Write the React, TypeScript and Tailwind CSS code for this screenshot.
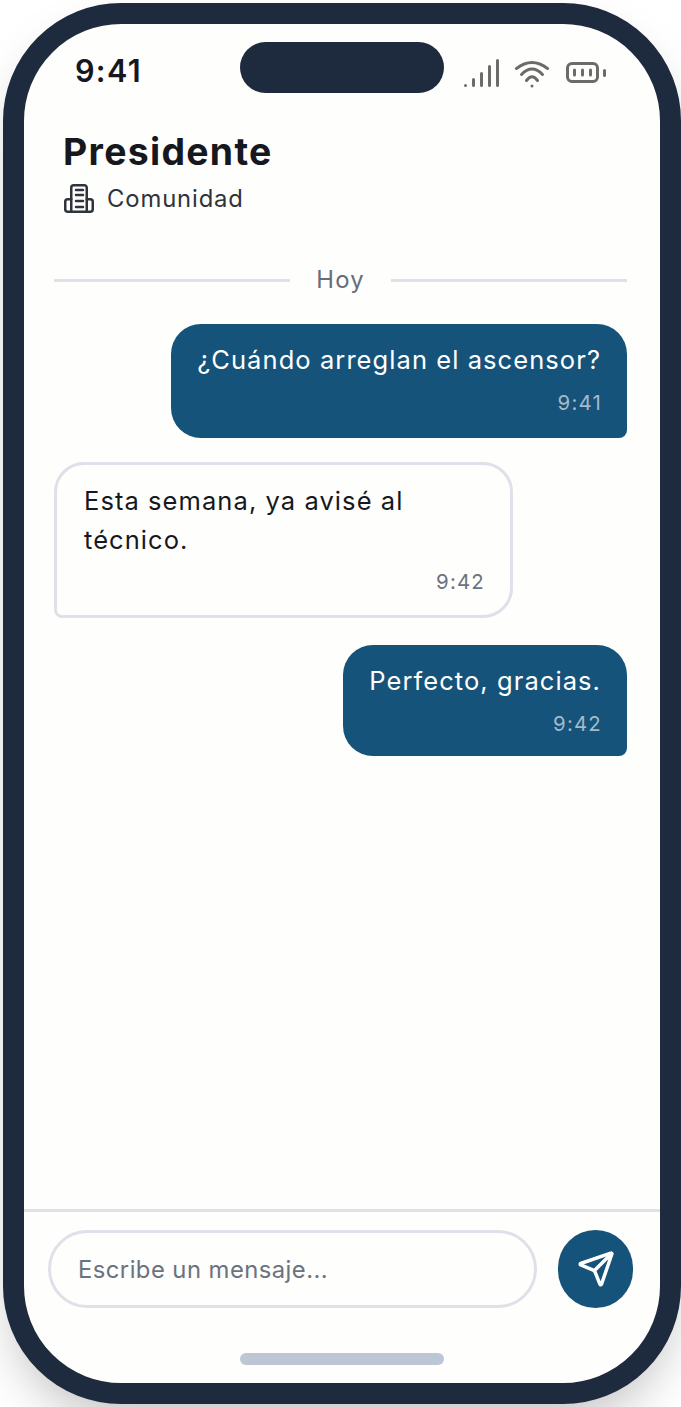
import { Send } from "lucide-react";

function SignalIcon() {
  return (
    <svg width="36" height="36" viewBox="0 0 36 36" fill="none" stroke="#6b6b6b" strokeLinecap="round" strokeWidth="3">
      <path d="M2.500 32.500v.1M10.500 26.500v6M18.500 20.500v12M26.500 13.500v19M34.500 7.500v25" />
    </svg>
  );
}

function WifiIcon() {
  return (
    <svg width="36" height="36" viewBox="0 0 36 36" fill="none" stroke="#6b6b6b" strokeLinecap="round" strokeWidth="3">
      <path d="M2.500 15.500Q18 3.500 33.500 15.500" />
      <path d="M7.500 21.500Q18 10.500 28.500 21.500" />
      <path d="M12.500 27.500Q18 20 23.500 27.500" />
      <path d="M18 33v.1" />
    </svg>
  );
}

function BatteryIcon() {
  return (
    <svg width="42" height="36" viewBox="0 0 42 36" fill="none" stroke="#6b6b6b" strokeLinecap="round" strokeWidth="3">
      <rect x="2.500" y="10.500" width="30" height="18" rx="4.500" />
      <path d="M9.500 17v5M17.500 17v5M25.500 17v5" />
      <path d="M39.500 17.500v5" />
    </svg>
  );
}

function BuildingIcon() {
  return (
    <svg width="32" height="32" viewBox="0 0 32 32" fill="none" stroke="#2f343c" strokeWidth="2.500" strokeLinecap="round" strokeLinejoin="round">
      <path d="M9.250 28.750V4.750a2.500 2.500 0 0 1 2.500-2.500h10.500a2.500 2.500 0 0 1 2.500 2.500v24" />
      <path d="M9.250 16.250H5.750a2.500 2.500 0 0 0-2.500 2.500v7.500a2.500 2.500 0 0 0 2.500 2.500h22.500a2.500 2.500 0 0 0 2.500-2.500v-7.500a2.500 2.500 0 0 0-2.500-2.500h-3.500" />
      <path d="M14 7h7M14 12h7M14 18h7M14 24h7" />
    </svg>
  );
}

function Outgoing({ text, time, className }: { text: string; time: string; className: string }) {
  return (
    <div className={`self-end rounded-[30px] rounded-br-lg bg-[#16537a] pt-[17px] pr-[26px] pl-[26px] ${className}`}>
      <p className="text-[25.500px] leading-[38px] tracking-[1.07px] text-white">{text}</p>
      <p className="mt-[9px] -mr-[1px] text-right text-[20.400px] leading-[29px] tracking-[1.2px] text-[#a3bacb]">{time}</p>
    </div>
  );
}

export default function App() {
  return (
    <div className="h-[1407px] w-[681px] overflow-hidden bg-white pt-[3px] pl-[3px] font-['Inter',sans-serif]">
      <div className="relative flex h-[1401px] w-[678px] flex-col overflow-hidden rounded-[118px] border-[21px] border-[#1e2a3d] bg-[#fefefc] shadow-2xl">
        <div className="absolute top-[18px] left-[216px] h-[51px] w-[204px] rounded-[26px] bg-[#1e2a3d]" />

        <div className="flex h-[72px] shrink-0 items-center justify-between pt-[22px] pr-[53px] pl-[51px]">
          <span className="text-[30.600px] font-semibold tracking-[1.300px] text-[#16181d]">9:41</span>
          <div className="flex items-center gap-[15px]">
            <SignalIcon />
            <WifiIcon />
            <BatteryIcon />
          </div>
        </div>

        <div className="px-[38px] pt-[32px]">
          <h1 className="ml-[1px] text-[37.400px] leading-[48px] font-bold tracking-[1.300px] text-[#16181d]">Presidente</h1>
          <div className="mt-[6px] flex items-center gap-[13px]">
            <BuildingIcon />
            <span className="text-[23.800px] leading-[34px] tracking-[0.880px] text-[#2f343c]">Comunidad</span>
          </div>
        </div>

        <div className="flex flex-1 flex-col pt-[47px] pr-[33px] pl-[30px]">
          <div className="flex items-center">
            <div className="h-[3px] flex-1 bg-[#dfe0e8]" />
            <span className="mx-[26px] text-[23.800px] leading-[34px] tracking-[1.200px] text-[#656c7b]">Hoy</span>
            <div className="h-[3px] flex-1 bg-[#dfe0e8]" />
          </div>

          <div className="mt-[27px] flex flex-col gap-[24px]">
            <Outgoing text="¿Cuándo arreglan el ascensor?" time="9:41" className="pb-[21px]" />

            <div className="w-[459px] rounded-[30px] rounded-bl-lg border-[3px] border-[#dfe0e8] bg-[#fefefc] px-[27px] pt-[16px] pb-[19px]">
              <p className="text-[25.500px] leading-[39px] tracking-[1.07px] text-[#16181d]">Esta semana, ya avisé al técnico.</p>
              <p className="mt-[8px] -mr-[2px] text-right text-[20.400px] leading-[29px] tracking-[1.2px] text-[#6b7280]">9:42</p>
            </div>

            <Outgoing text="Perfecto, gracias." time="9:42" className="mt-[3px] pb-[18px]" />
          </div>
        </div>

        <div className="flex h-[99px] shrink-0 gap-[21px] border-t-[3px] border-[#dfe0e8] pt-[18px] pr-[27px] pl-[24px]">
          <div className="flex h-[78px] w-[489px] items-center rounded-full border-[3px] border-[#dfe0e8] px-[27px] pt-[1px]">
            <span className="text-[23.800px] tracking-[0.46px] text-[#6b7280]">Escribe un mensaje...</span>
          </div>
          <button className="flex h-[78px] w-[75px] items-center justify-center rounded-full bg-[#16537a]">
            <Send size={38} color="#ffffff" strokeWidth={2.2} />
          </button>
        </div>

        <div className="flex h-[75px] shrink-0 justify-center pt-[45px]">
          <div className="h-[12px] w-[204px] rounded-full bg-[#bdc6d4]" />
        </div>
      </div>
    </div>
  );
}
